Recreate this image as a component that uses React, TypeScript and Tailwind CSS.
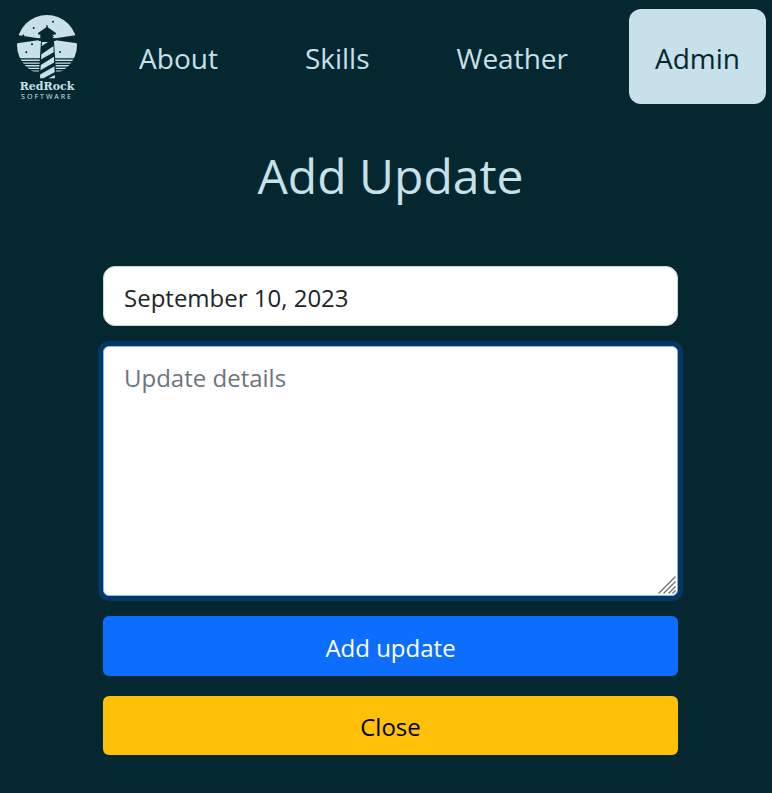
import { useState } from "react";

const links = ["About", "Skills", "Weather", "Admin"];

function Logo() {
  return (
    <a href="#home" className="flex w-[60px] shrink-0 flex-col items-center text-[#c7e0e9]">
      <svg viewBox="0 0 60 64" className="h-16 w-[60px]" aria-hidden="true">
        <defs>
          <clipPath id="disc">
            <circle cx="30" cy="30" r="30" />
          </clipPath>
          <clipPath id="tower">
            <path d="M25 27H36.2L38 63.5H23Z" />
          </clipPath>
        </defs>
        <g clipPath="url(#disc)" fill="#c7e0e9">
          <path d="M0 0H60V43.3H0Z" />
          <path d="M0 44.6h60v1.5H0zM0 47.4h60v1.4H0zM0 50.1h60v1.3H0zM0 52.8h60v1.2H0zM0 55.5h60v1H0z" />
        </g>
        <g fill="#042730">
          <path d="M-1 19.8 23 23.6V25L-1 28.4ZM61 19.8 37 23.6V25L61 28.4Z" />
          <path d="M30 11.7 38.9 18V19.4H37V23.3H38.7V26H37L39.4 64H21.6L24 26H21.7V23.3H23.3V19.4H21V18Z" />
          <path d="M29.4 10h1.2v3h-1.2z" />
          <circle cx="16.7" cy="13" r="1" />
          <circle cx="36" cy="6.7" r="1" />
          <circle cx="6.3" cy="20.5" r="1" />
          <circle cx="15" cy="29.3" r="1" />
          <circle cx="9.3" cy="37.3" r="1" />
          <circle cx="43" cy="37" r="1" />
        </g>
        <path d="M35.8 19.8h1.7v1.4h-1.7zM35.8 22h1.2v1h-1.2z" fill="#c7e0e9" />
        <g clipPath="url(#tower)" fill="#c7e0e9">
          <path d="M22 27H31L22 33ZM22 41 38 30V36.5L22 45.5ZM22 51 38 41V47L22 56ZM22 60 38 51V57L26 63.5H22ZM31 63.5 38 60V63.5Z" />
        </g>
      </svg>
      <span className="pt-px font-['DejaVu_Serif',serif] text-[11px] leading-[14px] font-bold">RedRock</span>
      <span className="font-['Noto_Sans',sans-serif] text-[7px] leading-[6px] tracking-[2px]">SOFTWARE</span>
    </a>
  );
}

export default function App() {
  const [date, setDate] = useState("September 10, 2023");
  const [details, setDetails] = useState("");

  return (
    <div className="min-h-screen bg-[#042730] font-['Open_Sans','Noto_Sans',sans-serif] text-[#c7e0e9]">
      <header className="flex items-end justify-between pt-[9px] pr-[6px] pl-[17px]">
        <div className="pb-1">
          <Logo />
        </div>
        <nav className="flex gap-[35px]">
          {links.map((link) => (
            <a
              key={link}
              href={`#${link.toLowerCase()}`}
              className={`rounded-xl px-[26px] pt-[29px] pb-[26px] text-[28px] leading-[40px] ${
                link === "Admin" ? "bg-[#c7e0e9] text-[#042730]" : ""
              }`}
            >
              {link}
            </a>
          ))}
        </nav>
      </header>
      <main className="pt-[42px] pr-[94px] pb-[38px] pl-[103px]">
        <h1 className="text-center text-[48px] leading-[60px]">Add Update</h1>
        <form className="mt-[60px] flex flex-col gap-5 text-[24px] leading-[38px]" onSubmit={(e) => e.preventDefault()}>
          <input
            aria-label="Date"
            value={date}
            onChange={(e) => setDate(e.target.value)}
            className="h-[60px] w-full rounded-xl border border-[#ced4da] bg-white px-5 pt-[2px] text-[#212529] outline-none"
          />
          <div className="relative flex">
            <textarea
              aria-label="Update details"
              placeholder="Update details"
              value={details}
              onChange={(e) => setDetails(e.target.value)}
              className="h-[250px] w-full resize-none rounded-md border border-[#86b7fe] bg-white px-5 py-3 text-[#212529] shadow-[0_0_0_5px_#053763] outline-none placeholder:text-[#6c757d]"
            />
            <svg viewBox="0 0 20 20" className="pointer-events-none absolute right-[1px] bottom-[1px] h-5 w-5" aria-hidden="true">
              <path d="M1.5 18.5 18.5 1.5M6.5 18.5 18.5 6.5M11.5 18.5 18.5 11.5M15.5 18.5 18.5 15.5" stroke="#6b6b6b" strokeWidth="1.2" />
            </svg>
          </div>
          <button type="submit" className="h-[60px] rounded-md bg-[#0d6efd] pt-1 text-white">
            Add update
          </button>
          <button type="button" className="h-[59px] rounded-md bg-[#ffc107] pt-[2px] text-black">
            Close
          </button>
        </form>
      </main>
    </div>
  );
}
